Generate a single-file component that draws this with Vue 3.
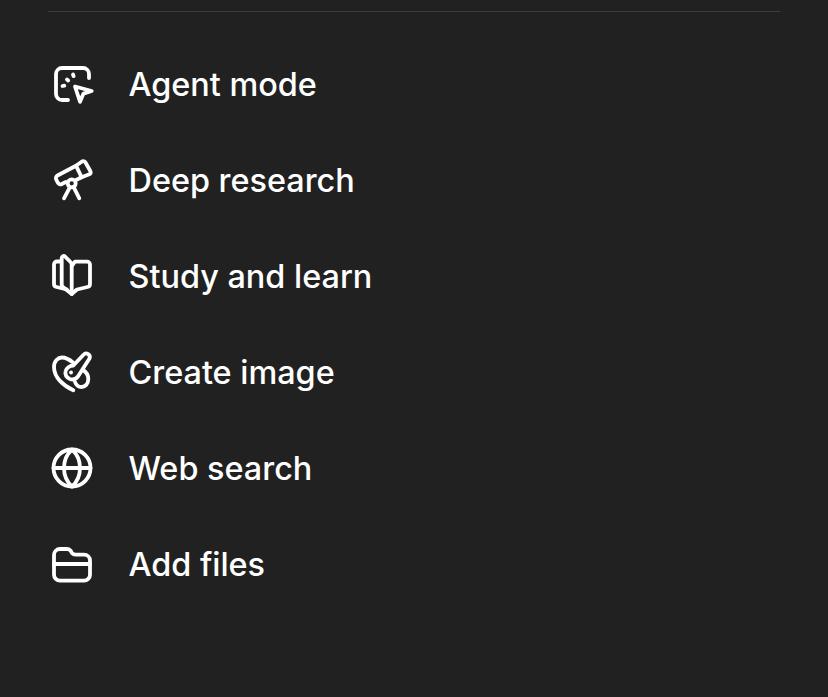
<template>
  <div class="sheet">
    <div class="divider"></div>
    <ul class="menu">
      <li v-for="item in items" :key="item.label" class="menu-item">
        <svg class="icon" viewBox="0 0 48 48" fill="none" stroke="currentColor" stroke-width="3.8" stroke-linecap="round" stroke-linejoin="round">
          <path v-for="d in item.paths" :key="d" :d="d" />
        </svg>
        <span>{{ item.label }}</span>
      </li>
    </ul>
  </div>
</template>

<script setup>
const items = [
  {
    label: "Agent mode",
    paths: [
      "M20 40H14a6 6 0 0 1-6-6V14a6 6 0 0 1 6-6h21a6 6 0 0 1 6 6v4",
      "M25 14.5l.6 1.6M14.5 26l1.8-.3M19 19.5l1.2 1",
      "M27 26.5 43.7 31l-8.2 2.6L32 41.7z",
    ],
  },
  {
    label: "Deep research",
    paths: [
      "M28 9.7 9.500 19.500a3 3 0 0 0-1.300 4l1.600 3.200a3 3 0 0 0 4 1.300l4-2",
      "M28 9.700 34 5.500a2.500 2.500 0 0 1 3.500 1L42.300 15a2.500 2.500 0 0 1-1 3.300l-7.600 3z",
      "M33.700 21.300 28 24",
      "M23.700 23.300a4 4 0 1 1 0 8 4 4 0 0 1 0-8z",
      "M21.300 32.300 16 42.300M26.300 32.300l5 10",
    ],
  },
  {
    label: "Study and learn",
    paths: [
      "M13.700 6a2 2 0 0 1 3.300-1.500l5 5a4 4 0 0 1 1.700 3.500V42l-8.800-7a4 4 0 0 1-1.200-2.400z",
      "M13 9.500H9a3 3 0 0 0-3 3V32a3 3 0 0 0 2.500 3l10.200 2.300",
      "M23.700 14 27 9.700h12a3 3 0 0 1 3 3V32a3 3 0 0 1-2.500 3L29 37.500 23.700 42",
    ],
  },
  {
    label: "Create image",
    paths: [
      "M25.300 42.300C16 38 6 30 6 19c0-6 4-9.500 8-9.500 5 0 8 2.500 11.300 5.200",
      "M25.300 17.500 35.500 6.700a3.600 3.600 0 0 1 6 3.800L36 19l-6 9.500c-2.500 3-5.500 3.500-8 2.500-3.500-1.500-5-4.500-4.500-7.500.5-3.500 4.500-6 7.800-6z",
      "M23 24.500h.1",
      "M35 22c3.500 2 5.300 5 5.300 9.300 0 4.700-3.300 7.700-6.600 7.700-3 0-5.700-2-6.700-5",
    ],
  },
  {
    label: "Web search",
    paths: [
      "M24 5.500a18.500 18.500 0 1 1 0 37 18.500 18.500 0 0 1 0-37z",
      "M24 5.500c5 4.500 8 11 8 18.500s-3 14-8 18.500c-5-4.500-8-11-8-18.500s3-14 8-18.500z",
      "M5.500 24h37",
    ],
  },
  {
    label: "Add files",
    paths: [
      "M6 15a6 6 0 0 1 6-6h7a5 5 0 0 1 3.500 1.500l1.500 2.700a5 5 0 0 0 3.500 1.500H36a6 6 0 0 1 6 6v14a6 6 0 0 1-6 6H12a6 6 0 0 1-6-6z",
      "M6 24h36",
    ],
  },
];
</script>

<style scoped>
.sheet {
  width: 828px;
  height: 697px;
  box-sizing: border-box;
  padding: 11px 48px 0;
  background: #212121;
  color: #fff;
  font-family: Inter, "Liberation Sans", sans-serif;
  overflow: hidden;
}

.divider {
  height: 1px;
  background: #3d3d3d;
}

.menu {
  list-style: none;
  margin: 24px 0 0;
  padding: 0;
}

.menu-item {
  display: flex;
  align-items: center;
  gap: 32.5px;
  height: 96px;
  font-size: 32.4px;
  font-weight: 500;
}

.icon {
  width: 48px;
  height: 48px;
  flex: none;
}
</style>
